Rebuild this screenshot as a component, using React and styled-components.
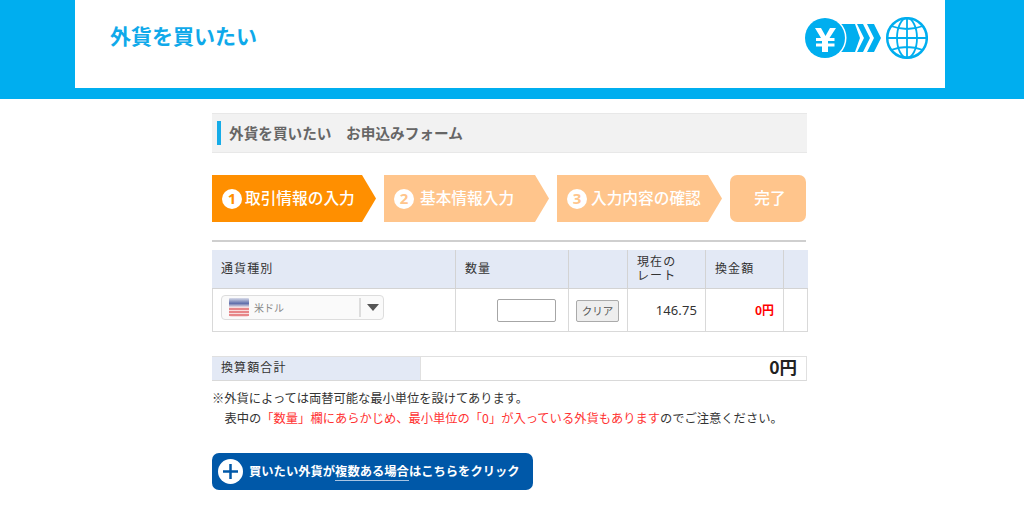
import React from "react";
import styled, { createGlobalStyle } from "styled-components";

const Global = createGlobalStyle`
  html, body { margin: 0; padding: 0; background: #fff; }
  body { font-family: "Noto Sans CJK JP", "Noto Sans", sans-serif; color: #333; height: 512px; overflow: hidden; }
`;

const Header = styled.header`
  height: 88px;
  background: #00aeef;
  border-bottom: 11px solid #00aeef;
  padding-right: 4px;
  display: flex;
  justify-content: center;
`;
const HeaderInner = styled.div`
  width: 870px;
  height: 88px;
  background: #fff;
  box-sizing: border-box;
  padding: 17px 17px 0 35px;
  display: flex;
  justify-content: space-between;
  align-items: flex-start;
`;
const Title = styled.h1`
  margin: -1px 0 0;
  font-size: 21px;
  line-height: 38px;
  font-weight: 700;
  color: #0fa9ea;
`;
const Main = styled.main`
  width: 595px;
  margin: 14px 0 0 212px;
`;
const Heading = styled.h2`
  margin: 0;
  height: 40px;
  box-sizing: border-box;
  background: #f2f2f2;
  border-top: 1px solid #e8e8e8;
  border-bottom: 1px solid #e8e8e8;
  padding: 0 0 2px 5px;
  display: flex;
  align-items: center;
  gap: 8px;
  font-size: 14.65px;
  font-weight: 700;
  color: #666;
`;
const HeadingBar = styled.span`
  width: 4px;
  height: 24px;
  margin-top: 2px;
  background: #16ace8;
`;
const Steps = styled.ol`
  list-style: none;
  margin: 22px 0 0;
  padding: 0;
  display: flex;
  gap: 8px;
`;
const Step = styled.li`
  width: ${(p) => (p.$first ? 164 : 165)}px;
  height: 47px;
  box-sizing: border-box;
  padding: 0 0 3px 10px;
  background: ${(p) => (p.$active ? "#ff8f00" : "#ffc58c")};
  clip-path: polygon(0 0, calc(100% - 14px) 0, 100% 50%, calc(100% - 14px) 100%, 0 100%);
  display: flex;
  align-items: center;
  gap: ${(p) => p.$gap || 4}px;
  color: #fff;
  font-size: 15.7px;
  font-weight: 500;
  white-space: nowrap;
`;
const StepNum = styled.span`
  width: 20px;
  height: 20px;
  margin-top: 3px;
  border-radius: 50%;
  background: #fff;
  color: ${(p) => (p.$active ? "#ff8f00" : "#ffc58c")};
  display: flex;
  align-items: center;
  justify-content: center;
  font-size: 15px;
  font-weight: 700;
  font-family: "Noto Sans", sans-serif;
  line-height: 1;
`;
const DoneStep = styled.li`
  width: 76px;
  height: 47px;
  box-sizing: border-box;
  padding: 0 0 3px 4px;
  border-radius: 7px;
  background: #ffc58c;
  color: #fff;
  display: flex;
  align-items: center;
  justify-content: center;
  font-size: 15.7px;
  font-weight: 500;
`;
const Rule = styled.hr`
  margin: 18px 0 8px;
  border: 0;
  height: 2px;
  width: 594px;
  background: #cfcfcf;
`;
const Table = styled.table`
  width: 595px;
  table-layout: fixed;
  border-collapse: collapse;
  font-size: 12px;
  color: #333;
`;
const Th = styled.th`
  height: 38px;
  box-sizing: border-box;
  background: #e3e9f5;
  border: 1px solid #d3d3d3;
  border-top: 0;
  border-left-color: ${(p) => (p.$first ? "#e3e9f5" : "#d3d3d3")};
  border-right-color: ${(p) => (p.$last ? "#e3e9f5" : "#d3d3d3")};
  text-align: left;
  padding: 0 0 2px ${(p) => (p.$first ? 8 : 9)}px;
  font-weight: 400;
  font-size: 12px;
  line-height: 14px;
  letter-spacing: 1.1px;
`;
const Td = styled.td`
  height: 43px;
  box-sizing: border-box;
  border: 1px solid #d9d9d9;
  padding: 0 9px;
  text-align: ${(p) => p.$align || "left"};
  color: ${(p) => (p.$red ? "#f00" : "#333")};
  font-weight: ${(p) => (p.$red ? 700 : 400)};
`;
const Rate = styled.span`
  margin-right: -1px;
  font-size: 13px;
  letter-spacing: 0.1px;
  font-family: "Noto Sans", sans-serif;
`;
const Select = styled.div`
  width: 163px;
  height: 25px;
  box-sizing: border-box;
  margin: 0 0 4px -1px;
  border: 1px solid #ddd;
  border-radius: 4px;
  background: #fafafa;
  display: flex;
  align-items: center;
  padding-left: 7px;
  font-size: 10px;
  color: #888;
`;
const SelectText = styled.span`
  margin-left: 5px;
  flex: 1;
`;
const SelectDivider = styled.span`
  width: 2px;
  height: 19px;
  background: #ddd;
`;
const Caret = styled.span`
  margin: 0 4px 0 6px;
  width: 0;
  height: 0;
  border-left: 6px solid transparent;
  border-right: 6px solid transparent;
  border-top: 7px solid #555;
`;
const QtyInput = styled.input`
  width: 59px;
  height: 23px;
  box-sizing: border-box;
  margin: 0 3px -2px 0;
  border: 1px solid #a6a6a6;
  border-radius: 2px;
  background: #fff;
  vertical-align: middle;
`;
const ClearButton = styled.button`
  width: 43px;
  height: 22px;
  padding: 0;
  margin: 0 0 -2px -2px;
  border: 1px solid #aaa;
  border-radius: 2px;
  background: #eee;
  color: #555;
  font-family: inherit;
  font-size: 10.5px;
  vertical-align: middle;
`;
const TotalRow = styled.div`
  margin-top: 24px;
  height: 25px;
  box-sizing: border-box;
  width: 595px;
  border-top: 1px solid #e0e0e0;
  border-bottom: 1px solid #d9d9d9;
  border-right: 1px solid #e0e0e0;
  display: flex;
`;
const TotalLabel = styled.div`
  width: 208px;
  box-sizing: border-box;
  background: #e3e9f5;
  padding-left: 9px;
  font-size: 12px;
  letter-spacing: 1.1px;
  line-height: 20px;
`;
const TotalValue = styled.div`
  flex: 1;
  text-align: right;
  padding-right: 9px;
  font-size: 17.5px;
  font-weight: 700;
  line-height: 20px;
  color: #222;
  border-left: 1px solid #e0e0e0;
`;
const Notes = styled.div`
  margin-top: 7px;
  font-size: 12.28px;
  line-height: 20px;
  color: #333;
`;
const NoteIndent = styled.div`
  padding-left: 12.5px;
  white-space: nowrap;
`;
const Red = styled.span`
  color: #f33;
`;
const AddButton = styled.a`
  margin-top: 25px;
  width: 321px;
  height: 37px;
  box-sizing: border-box;
  padding-left: 6px;
  border-radius: 7px;
  background: #0058a8;
  color: #fff;
  display: flex;
  align-items: center;
  gap: 6px;
  font-size: 12.3px;
  font-weight: 700;
  white-space: nowrap;
`;
const PlusCircle = styled.svg`
  width: 25px;
  height: 25px;
  flex: none;
`;
const Under = styled.span`
  border-bottom: 1px solid #a9c5e3;
  line-height: 15px;
`;

const Logo = () => (
  <svg width="123" height="44" viewBox="0 0 123 44">
    <path d="M36 7h14l5 14-5 14H36z" fill="#00aeef" />
    <path d="M52 7h6l7 14-7 14h-6l7-14z" fill="#00aeef" />
    <path d="M62 7h7l7 14-7 14h-7l7-14z" fill="#00aeef" />
    <circle cx="20" cy="21" r="21.500" fill="#fff" />
    <circle cx="20" cy="21" r="20" fill="#00aeef" />
    <path d="M10 11h6l4.500 8 4.500-8h6l-6.500 10h5v3H23v2.500h6.500v3H23V35h-6v-5.500h-6v-3h6V24h-6v-3h5z" fill="#fff" />
    <g fill="none" stroke="#00aeef" strokeWidth="1.800">
      <circle cx="102" cy="21" r="19.800" strokeWidth="2.500" />
      <ellipse cx="102" cy="21" rx="10" ry="19.800" />
      <path d="M102 1v40M82 21h40M86 9Q102 15 118 9M86 33Q102 27 118 33" />
    </g>
  </svg>
);

const Flag = () => (
  <svg width="20" height="21" viewBox="0 0 20 21">
    <defs>
      <linearGradient id="flagBlue" x1="0" y1="0" x2="0" y2="1">
        <stop offset="0" stopColor="#d9dcea" />
        <stop offset="0.6" stopColor="#5f6fab" />
        <stop offset="1" stopColor="#e9dfe6" />
      </linearGradient>
    </defs>
    <rect x="0" y="1" width="20" height="19" rx="3" fill="#f7dcdc" />
    <path d="M0 12h20M0 15h20M0 18h20" stroke="#e2696c" strokeWidth="1.600" />
    <path d="M1 1h18a1 1 0 011 1v8H0V2a1 1 0 011-1z" fill="url(#flagBlue)" />
  </svg>
);

export default function App() {
  return (
    <>
      <Global />
      <Header>
        <HeaderInner>
          <Title>外貨を買いたい</Title>
          <Logo />
        </HeaderInner>
      </Header>
      <Main>
        <Heading>
          <HeadingBar />
          外貨を買いたい　お申込みフォーム
        </Heading>
        <Steps>
          <Step $active $first $gap={3}><StepNum $active>1</StepNum>取引情報の入力</Step>
          <Step $gap={6}><StepNum>2</StepNum>基本情報入力</Step>
          <Step><StepNum>3</StepNum>入力内容の確認</Step>
          <DoneStep>完了</DoneStep>
        </Steps>
        <Rule />
        <Table>
          <colgroup>
            <col style={{ width: 243 }} />
            <col style={{ width: 113 }} />
            <col style={{ width: 59 }} />
            <col style={{ width: 78 }} />
            <col style={{ width: 78 }} />
            <col style={{ width: 24 }} />
          </colgroup>
          <thead>
            <tr>
              <Th $first>通貨種別</Th>
              <Th>数量</Th>
              <Th />
              <Th>現在の<br />レート</Th>
              <Th>換金額</Th>
              <Th $last />
            </tr>
          </thead>
          <tbody>
            <tr>
              <Td>
                <Select>
                  <Flag />
                  <SelectText>米ドル</SelectText>
                  <SelectDivider />
                  <Caret />
                </Select>
              </Td>
              <Td $align="right"><QtyInput /></Td>
              <Td $align="center"><ClearButton>クリア</ClearButton></Td>
              <Td $align="right"><Rate>146.75</Rate></Td>
              <Td $align="right" $red>0円</Td>
              <Td />
            </tr>
          </tbody>
        </Table>
        <TotalRow>
          <TotalLabel>換算額合計</TotalLabel>
          <TotalValue>0円</TotalValue>
        </TotalRow>
        <Notes>
          <div>※外貨によっては両替可能な最小単位を設けてあります。</div>
          <NoteIndent>表中の<Red>「数量」欄にあらかじめ、最小単位の「0」が入っている外貨もあります</Red>のでご注意ください。</NoteIndent>
        </Notes>
        <AddButton>
          <PlusCircle viewBox="0 0 25 25">
            <circle cx="12.500" cy="12.500" r="12.500" fill="#fff" />
            <path d="M12.500 5v15M5 12.500h15" stroke="#0058a8" strokeWidth="2.500" />
          </PlusCircle>
          <span>買いたい外貨が<Under>複数ある場合</Under>はこちらをクリック</span>
        </AddButton>
      </Main>
    </>
  );
}
